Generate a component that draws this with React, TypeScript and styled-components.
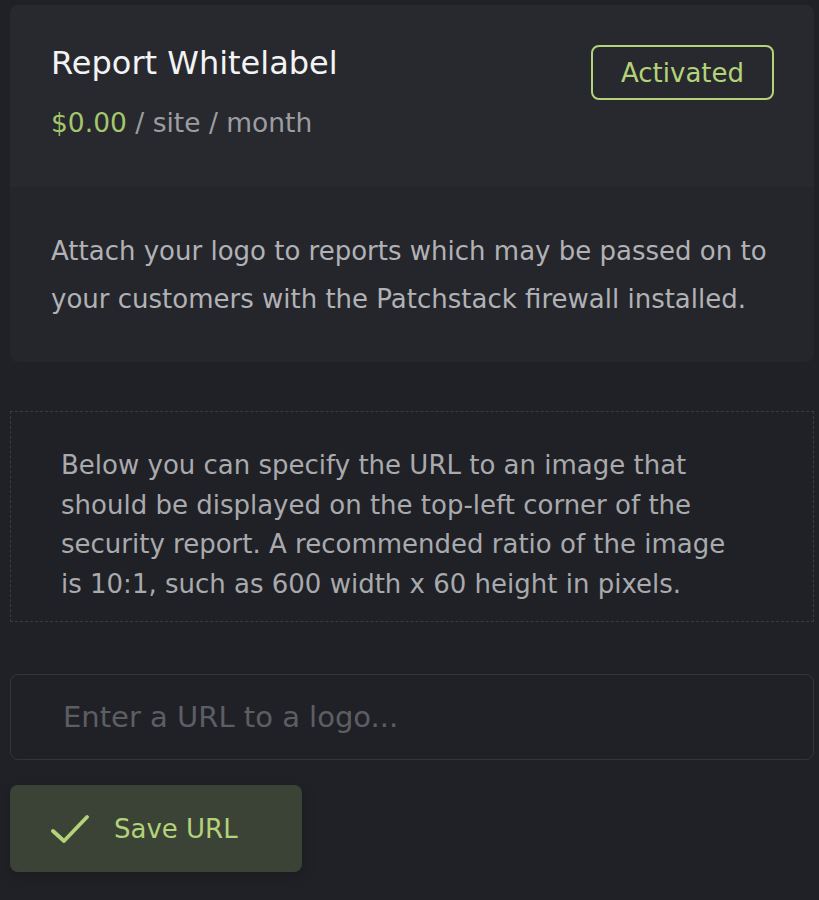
import { createGlobalStyle } from 'styled-components'
import styled from 'styled-components'

const GlobalStyle = createGlobalStyle`
	html, body {
		margin: 0;
		padding: 0;
		background: #202126;
	}
	body {
		font-family: 'DejaVu Sans', 'Liberation Sans', sans-serif;
		-webkit-font-smoothing: antialiased;
	}
	* {
		box-sizing: border-box;
	}
`

const green = '#b3d27a'

export default function App() {
	return (
		<>
			<GlobalStyle />
			<Page>
				<Card>
					<CardHeader>
						<div>
							<Title>Report Whitelabel</Title>
							<Price>
								<Amount>$0.00</Amount> / site / month
							</Price>
						</div>
						<StatusButton type='button'>Activated</StatusButton>
					</CardHeader>
					<CardBody>
						Attach your logo to reports which may be passed on to your
						customers with the Patchstack firewall installed.
					</CardBody>
				</Card>

				<Notice>
					<NoticeText>
						Below you can specify the URL to an image that should be displayed
						on the top-left corner of the security report. A recommended ratio
						of the image is 10:1, such as 600 width x 60 height in pixels.
					</NoticeText>
				</Notice>

				<UrlInput type='text' placeholder='Enter a URL to a logo...' />

				<SaveButton type='button'>
					<svg width='38' height='30' viewBox='0 0 38 30' fill='none'>
						<path
							d='M2 17 L13 27 L36 3'
							stroke={green}
							strokeWidth='3.8'
							strokeLinecap='round'
							strokeLinejoin='round'
						/>
					</svg>
					Save URL
				</SaveButton>
			</Page>
		</>
	)
}

const Page = styled.div`
	display: flex;
	flex-direction: column;
	align-items: stretch;
	padding: 5px 5px 28px 10px;
	min-height: 900px;
`

const Card = styled.section`
	border-radius: 8px;
	overflow: hidden;
	background: #25262b;
`

const CardHeader = styled.header`
	display: flex;
	justify-content: space-between;
	align-items: flex-start;
	height: 182px;
	padding: 40px 40px 0 41px;
	background: #28292e;
`

const Title = styled.h1`
	margin: 0;
	font-size: 32px;
	line-height: 36px;
	font-weight: 400;
	color: #f3f3f4;
`

const Price = styled.div`
	margin-top: 27px;
	font-size: 26.5px;
	line-height: 30px;
	color: #9c9da1;
`

const Amount = styled.span`
	color: #a4c76c;
`

const StatusButton = styled.button`
	width: 183px;
	height: 55px;
	padding: 0;
	border: 2px solid ${green};
	border-radius: 8px;
	background: transparent;
	color: ${green};
	font-family: inherit;
	font-size: 26px;
	cursor: pointer;
`

const CardBody = styled.p`
	margin: 0;
	padding: 40px 40px 39px 41px;
	font-size: 26px;
	line-height: 48px;
	color: #b1b2b5;
`

const Notice = styled.div`
	margin-top: 49px;
	height: 211px;
	padding: 34px 50px 0;
	border: 1px dashed #3a3b42;
`

const NoticeText = styled.p`
	margin: 0;
	max-width: 680px;
	font-size: 26px;
	line-height: 39.5px;
	color: #a9aaad;
`

const UrlInput = styled.input`
	margin-top: 52px;
	height: 86px;
	padding: 0 52px;
	border: 1px solid #34353b;
	border-radius: 8px;
	background: transparent;
	outline: none;
	font-family: inherit;
	font-size: 29px;
	color: #d0d0d3;
	&::placeholder {
		color: #5d5e63;
	}
`

const SaveButton = styled.button`
	align-self: flex-start;
	display: flex;
	align-items: center;
	gap: 25px;
	margin-top: 25px;
	width: 292px;
	height: 87px;
	padding: 0 0 0 41px;
	border: none;
	border-radius: 8px;
	background: #3b4336;
	box-shadow: 0 4px 14px rgba(0, 0, 0, 0.18);
	color: ${green};
	font-family: inherit;
	font-size: 26px;
	cursor: pointer;
`
